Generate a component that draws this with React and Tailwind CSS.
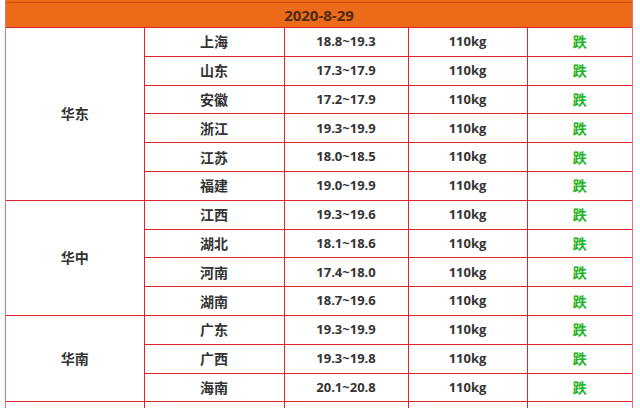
const groups = [
  {
    name: '华东',
    rows: [
      ['上海', '18.8~19.3'],
      ['山东', '17.3~17.9'],
      ['安徽', '17.2~17.9'],
      ['浙江', '19.3~19.9'],
      ['江苏', '18.0~18.5'],
      ['福建', '19.0~19.9'],
    ],
  },
  {
    name: '华中',
    rows: [
      ['江西', '19.3~19.6'],
      ['湖北', '18.1~18.6'],
      ['河南', '17.4~18.0'],
      ['湖南', '18.7~19.6'],
    ],
  },
  {
    name: '华南',
    rows: [
      ['广东', '19.3~19.9'],
      ['广西', '19.3~19.8'],
      ['海南', '20.1~20.8'],
    ],
  },
  { name: '', rows: [['', '']] },
]

const cell = 'border border-[#e0242c] text-center align-middle p-0'

export default function App() {
  return (
    <div
      className="w-[640px] h-[408px] overflow-hidden bg-white"
      style={{ fontFamily: '"Open Sans", "Noto Sans CJK SC", sans-serif' }}
    >
      <div className="ml-[5px] w-[628px] border-l border-r border-[#f07474]">
        <div className="h-[3px] bg-[#ec6a18] border-b border-[#c84a08]" />
        <div className="h-[24px] bg-[#ec6a18] flex items-center justify-center text-[15px] font-bold text-[#4e2a12]">
          2020-8-29
        </div>
        <table className="w-full border-collapse table-fixed text-[13px] font-bold text-[#333]">
          <colgroup>
            <col className="w-[138px]" />
            <col className="w-[140px]" />
            <col className="w-[124px]" />
            <col className="w-[119px]" />
            <col />
          </colgroup>
          <tbody>
            {groups.map((g) =>
              g.rows.map((r, i) => (
                <tr key={g.name + i} className="h-[28.8px]">
                  {i === 0 && (
                    <td rowSpan={g.rows.length} className={cell + ' border-l-0 text-[14px]'}>
                      {g.name}
                    </td>
                  )}
                  <td className={cell + ' text-[14px]'}>{r[0]}</td>
                  <td className={cell}>{r[1]}</td>
                  <td className={cell}>{r[0] && '110kg'}</td>
                  <td className={cell + ' border-r-0 text-[14px] text-[#22b322]'}>{r[0] && '跌'}</td>
                </tr>
              ))
            )}
          </tbody>
        </table>
      </div>
    </div>
  )
}
